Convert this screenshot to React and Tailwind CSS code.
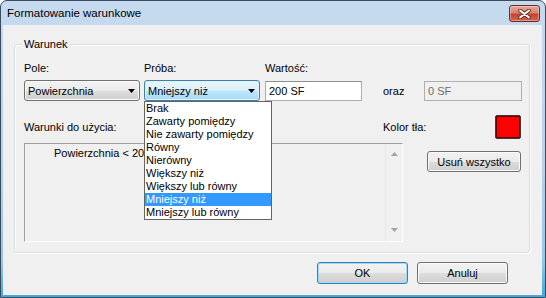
const font = { fontFamily: '"Liberation Sans", Arial, sans-serif' };

const items = [
  'Brak',
  'Zawarty pomiędzy',
  'Nie zawarty pomiędzy',
  'Równy',
  'Nierówny',
  'Większy niż',
  'Większy lub równy',
  'Mniejszy niż',
  'Mniejszy lub równy',
];

const Arrow = ({ color = '#000' }) => (
  <svg width="7" height="4" viewBox="0 0 7 4">
    <path d="M0 0h7L3.5 4z" fill={color} />
  </svg>
);

const btn =
  'flex items-center justify-center rounded-[3px] border text-[11px] font-normal text-black bg-[linear-gradient(to_bottom,#f2f2f2_0%,#ebebeb_50%,#dddddd_51%,#cfcfcf_100%)]';

export default function App() {
  const selected = 'Mniejszy niż';

  return (
    <div className="w-[546px] h-[298px] bg-white" style={font}>
      <div className="w-full h-full flex flex-col rounded-t-[7px] border border-[#3a4a5f] bg-[linear-gradient(to_bottom,#c6daef_0%,#b9d1ea_55%,#94c7e6_88%,#3fa9dc_100%)]">
        {/* Title bar */}
        <div className="h-[24px] flex items-start justify-between shrink-0">
          <span className="pl-[6px] pt-[5px] text-[11.5px] leading-[14px] text-black">
            Formatowanie warunkowe
          </span>
          <button className="mt-[4px] mr-[5px] w-[31px] h-[17px] flex items-center justify-center rounded-[3px] border border-[#6b2a26] bg-[linear-gradient(to_bottom,#e8a99b_0%,#d7826f_45%,#c6452f_55%,#d2634a_100%)] shadow-[inset_0_0_0_1px_rgba(255,255,255,0.35)]">
            <svg width="13" height="10" viewBox="0 0 13 10">
              <path d="M2 1.5l9 7M11 1.5l-9 7" stroke="#5b2a25" strokeWidth="3.6" strokeLinecap="round" />
              <path d="M2 1.5l9 7M11 1.5l-9 7" stroke="#fff" strokeWidth="2" strokeLinecap="round" />
            </svg>
          </button>
        </div>

        {/* Client area */}
        <div className="flex-1 ml-[2px] mr-[3px] mb-[2px] bg-[#f0f0f0] flex flex-col text-[11px] leading-[14px] text-black">
          {/* Group box */}
          <div className="relative mt-[19px] ml-[11px] w-[516px] rounded-[3px] border border-[#d5dfe5] shadow-[inset_1px_1px_0_#fff,1px_1px_0_#fff] pl-[9px] pt-[16px] pb-[10px]">
            <span className="absolute left-[7px] top-[-8px] px-[2px] bg-[#f0f0f0]">Warunek</span>

            {/* Labels row */}
            <div className="flex h-[14px]">
              <span className="w-[120px]">Pole:</span>
              <span className="w-[121px]">Próba:</span>
              <span>Wartość:</span>
            </div>

            {/* Controls row */}
            <div className="flex mt-[5px] h-[21px]">
              <div className="w-[116px] h-[21px] rounded-[3px] border border-[#707070] bg-[linear-gradient(to_bottom,#f2f2f2_0%,#ebebeb_50%,#dddddd_51%,#cfcfcf_100%)] shadow-[inset_0_0_0_1px_#fbfbfb] flex items-center justify-between pl-[3px] pr-[4px]">
                <span>Powierzchnia</span>
                <Arrow />
              </div>

              <div className="relative ml-[4px] w-[116px] h-[21px]">
                <div className="w-full h-full rounded-[3px] border border-[#3c7fb1] bg-[linear-gradient(to_bottom,#eaf6fd_0%,#d9f0fc_50%,#bee6fd_51%,#a7d9f5_100%)] shadow-[inset_0_0_0_1px_#e2f3fc] flex items-center justify-between pl-[3px] pr-[4px]">
                  <span>{selected}</span>
                  <Arrow />
                </div>
                {/* Open dropdown list */}
                <div className="absolute left-0 top-[21px] z-10 w-[128px] border border-[#646464] bg-white">
                  {items.map((it) => (
                    <div
                      key={it}
                      className={`h-[13px] leading-[13px] pl-[1px] ${
                        it === selected ? 'bg-[#3399ff] text-white' : 'text-black'
                      }`}
                    >
                      {it}
                    </div>
                  ))}
                </div>
              </div>

              <div className="ml-[5px] mt-[1px] w-[97px] h-[20px] border border-[#abadb3] border-t-[#8e8f8f] bg-white flex items-center pl-[3px]">
                200 SF
              </div>
              <span className="w-[62px] pl-[21px] flex items-center">oraz</span>
              <div className="mt-[1px] w-[98px] h-[20px] border border-[#afafaf] bg-[#f0f0f0] flex items-center pl-[3px] text-[#6d6d6d]">
                0 SF
              </div>
            </div>

            {/* Label row 2 */}
            <div className="flex items-center mt-[14px] h-[24px]">
              <span className="w-[359px]">Warunki do użycia:</span>
              <span className="w-[112px]">Kolor tła:</span>
              <div className="w-[26px] h-[24px] rounded-[2px] border border-[#3a3a3a] bg-[#ff0000] shadow-[inset_0_0_0_1px_#6a0000]" />
            </div>

            {/* List + remove */}
            <div className="flex mt-[4px]">
              <div className="w-[379px] h-[99px] border border-[#a0a0a0] border-r-white border-b-white bg-[#f0f0f0] flex">
                <div className="flex-1 pl-[29px] pt-[2px]">Powierzchnia &lt; 200 SF</div>
                <div className="w-[17px] border-l border-[#e6e6e6] flex flex-col items-center justify-between pt-[8px] pb-[9px]">
                  <svg width="7" height="4" viewBox="0 0 7 4">
                    <path d="M0 4h7L3.5 0z" fill="#a3a3a3" />
                  </svg>
                  <Arrow color="#a3a3a3" />
                </div>
              </div>
              <button className={`${btn} ml-[24px] mt-[8px] w-[94px] h-[21px] border-[#707070] shadow-[inset_0_0_0_1px_#fbfbfb]`}>
                Usuń wszystko
              </button>
            </div>
          </div>

          {/* Dialog buttons */}
          <div className="flex mt-[9px] ml-[314px] gap-[9px]">
            <button className={`${btn} w-[91px] h-[22px] border-[#3c7fb1] shadow-[inset_0_0_0_1px_#9cdaf7]`}>
              OK
            </button>
            <button className={`${btn} w-[91px] h-[22px] border-[#707070] shadow-[inset_0_0_0_1px_#fbfbfb]`}>
              Anuluj
            </button>
          </div>
        </div>
      </div>
    </div>
  );
}
